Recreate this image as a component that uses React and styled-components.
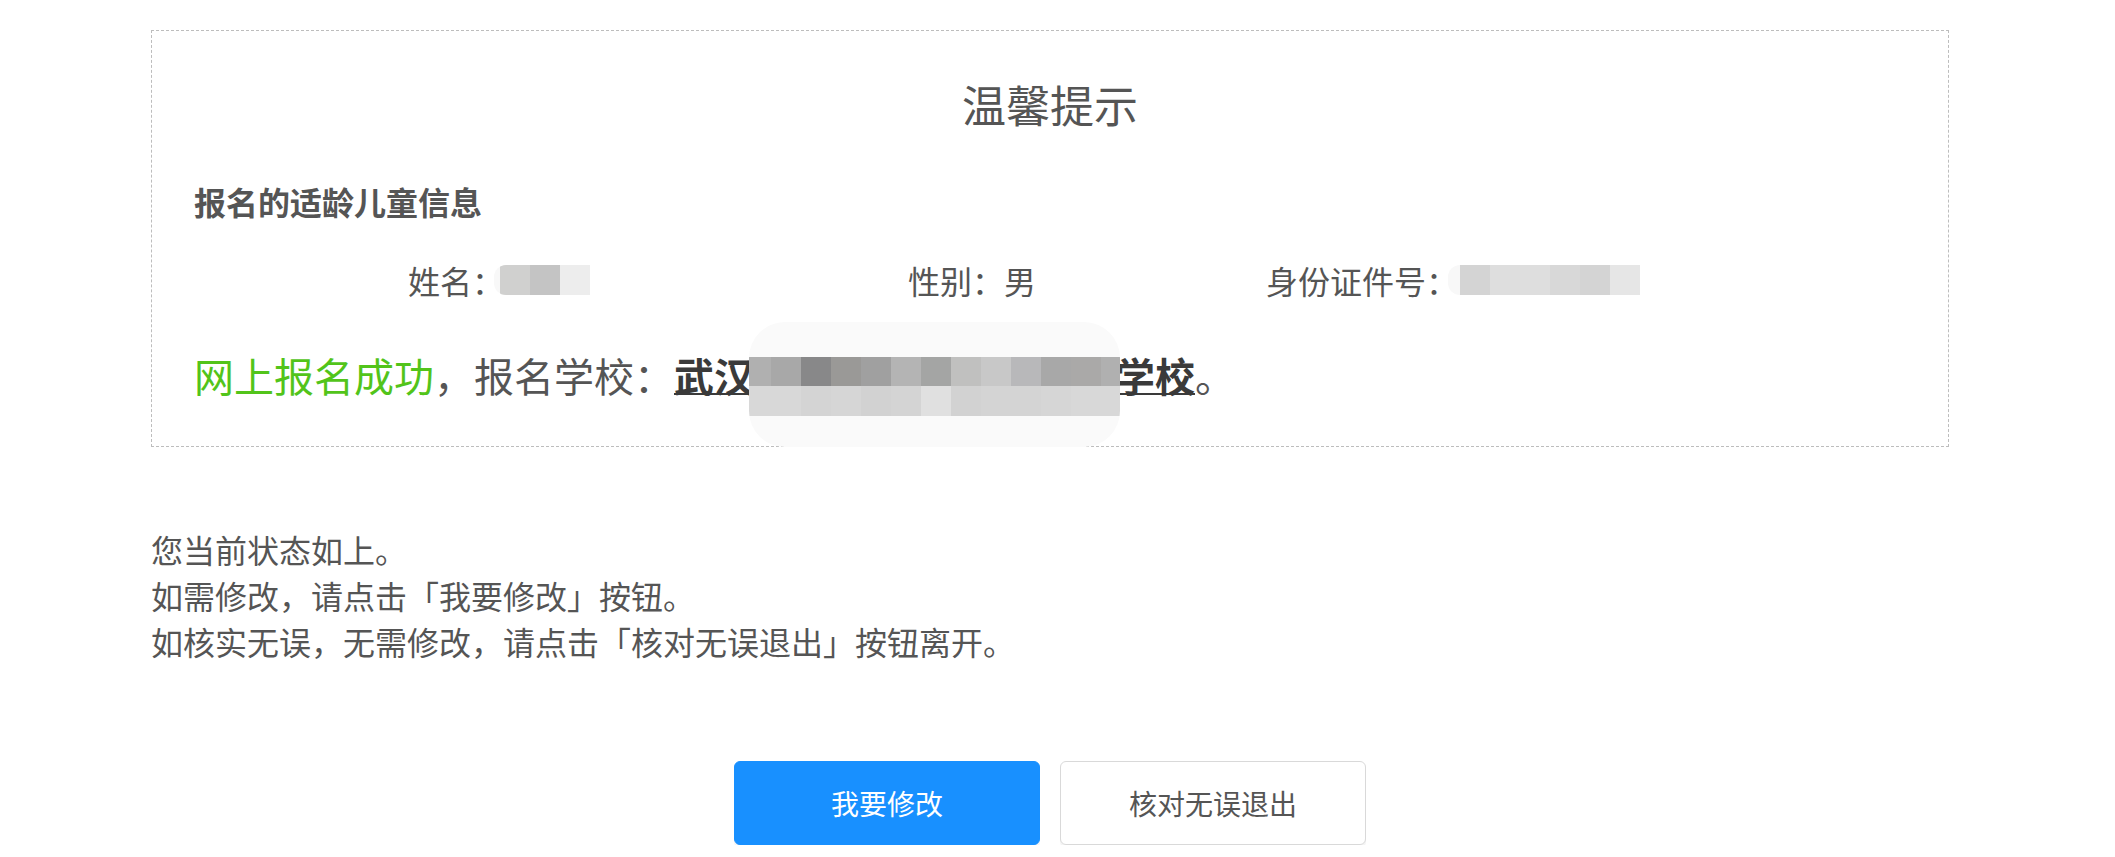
import React from "react";
import styled, { createGlobalStyle } from "styled-components";

const GlobalStyle = createGlobalStyle`
  html, body {
    margin: 0;
    padding: 0;
    background: #ffffff;
  }
  body {
    font-family: "Noto Sans CJK SC", "Microsoft YaHei", sans-serif;
    color: #555555;
  }
`;

const Page = styled.div`
  width: 2100px;
  padding-top: 30px;
`;

const Container = styled.div`
  width: 1798px;
  margin: 0 auto;
`;

const Notice = styled.div`
  position: relative;
  border: 1px dashed #bdbdbd;
  padding: 43px 42px 43px;
`;

const Title = styled.h2`
  margin: 0;
  text-align: center;
  font-size: 44px;
  font-weight: 400;
  line-height: 60px;
  color: #555555;
`;

const Heading = styled.h3`
  margin: 45px 0 0;
  font-size: 32px;
  font-weight: 700;
  line-height: 44px;
  color: #555555;
`;

const InfoRow = styled.div`
  margin-top: 35px;
  padding-left: 214px;
  display: grid;
  grid-template-columns: 500px 358px 1fr;
  font-size: 32px;
  line-height: 44px;
`;

const InfoItem = styled.div`
  display: flex;
  align-items: center;
`;

const Pixelated = styled.span`
  display: inline-flex;
  height: 30px;
  margin-left: ${(p) => p.$offset || 0}px;
  padding-left: ${(p) => p.$fade || 6}px;
  border-radius: 12px 0 0 12px;
  background: #f8f8f8;
  overflow: hidden;
`;

const Block = styled.span`
  display: block;
  width: 30px;
  height: 100%;
  flex: none;
`;

const Result = styled.p`
  margin: 45px 0 0;
  font-size: 40px;
  line-height: 56px;
  white-space: nowrap;
`;

const Success = styled.span`
  color: #52c41a;
`;

const School = styled.span`
  font-weight: 700;
  color: #3a3a3a;
  text-decoration: underline;
  text-decoration-thickness: 2px;
`;

const Hidden = styled.span`
  position: relative;
  display: inline-block;
  width: 361px;
  height: 56px;
  vertical-align: top;
`;

const SchoolBlur = styled.span`
  position: absolute;
  left: -5px;
  top: -25px;
  width: 371px;
  height: 125px;
  padding-top: 35px;
  box-sizing: border-box;
  border-radius: 36px;
  background: #fafafa;
  overflow: hidden;
`;

const BlurRow = styled.span`
  display: flex;
  height: ${(p) => p.$h}px;
  margin-left: -8px;
`;

const Status = styled.div`
  margin-top: 79px;
  font-size: 32px;
  line-height: 46px;
  color: #555555;

  p {
    margin: 0;
  }
`;

const Actions = styled.div`
  margin-top: 97px;
  display: flex;
  justify-content: center;
  gap: 20px;
`;

const Button = styled.button`
  width: 306px;
  height: 84px;
  border-radius: 6px;
  font-family: inherit;
  font-size: 28px;
  cursor: pointer;
  border: 1px solid ${(p) => (p.$primary ? "#1890ff" : "#d9d9d9")};
  background: ${(p) => (p.$primary ? "#1890ff" : "#ffffff")};
  color: ${(p) => (p.$primary ? "#ffffff" : "#555555")};
  box-shadow: 0 3px 0 rgba(0, 0, 0, 0.045);
`;

const nameBlocks = ["#d0d0cf", "#c4c4c4", "#ededed"];
const idBlocks = ["#d4d4d4", "#dedede", "#dedede", "#d8d8d8", "#d4d4d4", "#e6e6e6"];
const schoolTop = [
  "#b0b0b0", "#a8a8a8", "#888889", "#9a9997", "#a0a0a0", "#b4b4b4", "#a4a5a4",
  "#c0c0bf", "#c8c8c8", "#b8b8ba", "#a8a8a8", "#aaa9a8", "#b0b0b0",
];
const schoolBottom = [
  "#d8d8d8", "#d8d8d8", "#d4d4d4", "#d6d6d6", "#d2d2d2", "#d4d4d4", "#e0e0e0",
  "#d2d2d2", "#d4d4d4", "#d4d4d4", "#d6d6d6", "#d8d8d8", "#d8d8d8",
];

function Mosaic({ colors, offset, fade }) {
  return (
    <Pixelated $offset={offset} $fade={fade}>
      {colors.map((c, i) => (
        <Block key={i} style={{ background: c }} />
      ))}
    </Pixelated>
  );
}

export default function App() {
  return (
    <Page>
      <GlobalStyle />
      <Container>
        <Notice>
          <Title>温馨提示</Title>
          <Heading>报名的适龄儿童信息</Heading>
          <InfoRow>
            <InfoItem>
              姓名：
              <Mosaic colors={nameBlocks} offset={-10} fade={6} />
            </InfoItem>
            <InfoItem>性别：男</InfoItem>
            <InfoItem>
              身份证件号：
              <Mosaic colors={idBlocks} offset={-10} fade={12} />
            </InfoItem>
          </InfoRow>
          <Result>
            <Success>网上报名成功</Success>，报名学校：
            <School>
              武汉
              <Hidden>
                <SchoolBlur>
                  <BlurRow $h={29}>
                    {schoolTop.map((c, i) => (
                      <Block key={i} style={{ background: c }} />
                    ))}
                  </BlurRow>
                  <BlurRow $h={30}>
                    {schoolBottom.map((c, i) => (
                      <Block key={i} style={{ background: c }} />
                    ))}
                  </BlurRow>
                </SchoolBlur>
              </Hidden>
              学校
            </School>
            。
          </Result>
        </Notice>
        <Status>
          <p>您当前状态如上。</p>
          <p>如需修改，请点击「我要修改」按钮。</p>
          <p>如核实无误，无需修改，请点击「核对无误退出」按钮离开。</p>
        </Status>
        <Actions>
          <Button $primary>我要修改</Button>
          <Button>核对无误退出</Button>
        </Actions>
      </Container>
    </Page>
  );
}
